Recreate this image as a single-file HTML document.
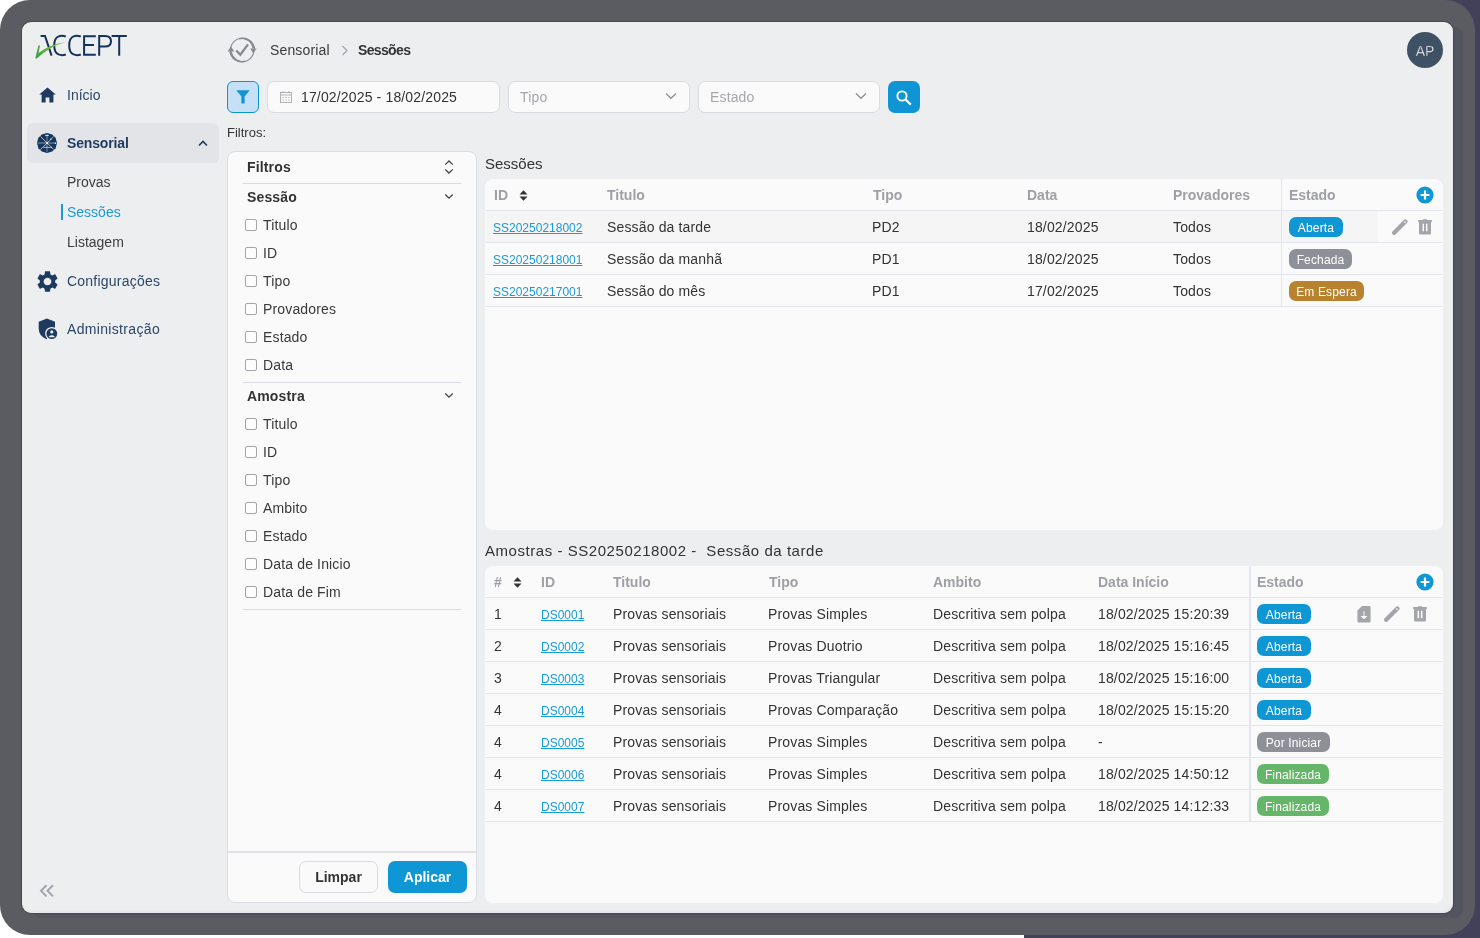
<!DOCTYPE html>
<html><head><meta charset="utf-8">
<style>
*{box-sizing:border-box;margin:0;padding:0}
html,body{width:1480px;height:938px;overflow:hidden}
body{position:relative;font-family:"Liberation Sans",sans-serif;background:linear-gradient(90deg,#ffffff 0,#ffffff 1024px,#424159 1024px)}
.a{position:absolute;white-space:nowrap;line-height:20px}
.frame{position:absolute;left:0;top:0;width:1475px;height:935px;background:#5a5c61;border-radius:30px}
.win{position:absolute;left:22px;top:22px;width:1431px;height:891px;background:#edeef0;border-radius:9px;box-shadow:0 0 0 1px #48494e,10px 5px 1px 0 rgba(50,55,90,0.18),inset 0 -2px 3px rgba(0,0,0,0.025)}
.nav{color:#2b4668;font-size:14px}
.sub{color:#3d3d3d;font-size:14px}
.t14{font-size:14px;color:#333;letter-spacing:0.15px}
.hd{font-size:14px;color:#9ea0a6;font-weight:bold}
.card{position:absolute;background:#fafafa;border-radius:8px}
.hl{position:absolute;height:1px;background:#e3e6ee}
.vl{position:absolute;width:1px;background:#e3e6ee}
.cb{position:absolute;width:12px;height:12px;border:1.2px solid #a3a5ab;border-radius:2px;background:#fdfdfd}
.lnk{font-size:12px;color:#1a9ad6;text-decoration:underline}
.badge{position:absolute;height:20px;border-radius:7px;color:#fff;font-size:12px;line-height:22px;text-align:center;white-space:nowrap;letter-spacing:0.15px}
.blue{background:#0f96d4}.gray{background:#8e9097}.orange{background:#b8822f}.green{background:#66b66a}
</style></head><body><div id="root" style="position:absolute;left:0;top:0;width:1480px;height:938px;will-change:transform">
<div class="frame"></div>
<div class="win"></div>

<!-- LOGO -->
<svg class="a" style="left:30px;top:28px" width="105" height="36" viewBox="30 28 105 36">
 <defs><linearGradient id="gg" x1="0" y1="1" x2="1" y2="0"><stop offset="0" stop-color="#3a9c48"/><stop offset="1" stop-color="#8cc63f"/></linearGradient></defs>
 <g fill="none" stroke="#16325a" stroke-width="2">
  <path d="M40.6 35.9H45L51.6 55.6"/>
  <path d="M65.8 36.5C62 35.3 54.2 34.6 54.2 45.4C54.2 56.1 62 55.7 65.8 54.5"/>
  <path d="M80.8 36.5C77 35.3 69.2 34.6 69.2 45.4C69.2 56.1 77 55.7 80.8 54.5"/>
  <path d="M95.8 36.3H84.1V54.8H95.8M84.1 45.1H94"/>
  <path d="M99.2 55.7V35.9H105Q111 35.9 111 41.2Q111 46.6 105 46.6H99.2"/>
  <path d="M111.6 35.9H126.8M119.2 35.9V55.7"/>
 </g>
 <path d="M35.3 58.2L38.3 45.6Q39.5 44.6 40 46L38.6 53Q50 44 65.5 42.2Q50 46 36.8 58.6Z" fill="url(#gg)"/>
</svg>

<!-- SIDEBAR -->
<svg class="a" style="left:39px;top:87px" width="17" height="16" viewBox="0 0 17 16"><path d="M8.5 0.4L0.2 7.6H2.6V15.4H6.6V10.6H10.4V15.4H14.4V7.6H16.8Z" fill="#1e3a5f"/></svg>
<div class="a nav" style="left:67px;top:85px">Início</div>

<div class="a" style="left:27px;top:123px;width:192px;height:40px;background:#e3e4e8;border-radius:6px"></div>
<svg class="a" style="left:35px;top:131px" width="24" height="24" viewBox="0 0 24 24"><path d="M12 2L17.2 3.4L20.6 6.8L22 12L20.6 17.2L17.2 20.6L12 22L6.8 20.6L3.4 17.2L2 12L3.4 6.8L6.8 3.4Z" fill="#16365c"/><g stroke="#ffffff" fill="none"><path d="M2.6 12H21.4M12 3V21" stroke-width="1.3" opacity="0.32"/><path d="M5.6 5.6L18.6 18.4M18.6 5.6L5.4 18.6" stroke-width="0.8" opacity="0.8"/><path d="M8.5 16.6Q12 15.8 15.5 16.6M10 4.6Q12 4.2 14 4.6" stroke-width="0.9" opacity="0.7"/></g><g fill="#fff" opacity="0.85"><circle cx="12" cy="12" r="1"/><circle cx="15.7" cy="8.3" r="0.8"/><circle cx="20.4" cy="12.2" r="0.7"/><circle cx="12" cy="4.6" r="0.7"/><circle cx="16.4" cy="16.4" r="0.7"/></g></svg>
<div class="a nav" style="left:67px;top:133px;font-weight:bold;color:#1f3a5f;letter-spacing:-0.15px">Sensorial</div>
<svg class="a" style="left:198px;top:139px" width="10" height="8" viewBox="0 0 10 8"><path d="M1 6.5L5 2.5L9 6.5" fill="none" stroke="#1f3a5f" stroke-width="1.6"/></svg>

<div class="a sub" style="left:67px;top:172px">Provas</div>
<div class="a" style="left:61px;top:204px;width:2px;height:16px;background:#1a9ad6"></div>
<div class="a sub" style="left:67px;top:202px;color:#1a9ad6">Sessões</div>
<div class="a sub" style="left:67px;top:232px">Listagem</div>

<svg class="a" style="left:36.6px;top:270.6px" width="21" height="21" viewBox="2.2 2.2 19.6 19.6"><path fill="#1e3a5f" d="M19.14 12.94c.04-.3.06-.61.06-.94 0-.32-.02-.64-.07-.94l2.03-1.58c.18-.14.23-.41.12-.61l-1.92-3.32c-.12-.22-.37-.29-.59-.22l-2.39.96c-.5-.38-1.03-.7-1.62-.94l-.36-2.54c-.04-.24-.24-.41-.48-.41h-3.84c-.24 0-.43.17-.47.41l-.36 2.54c-.59.24-1.13.57-1.62.94l-2.39-.96c-.22-.08-.47 0-.59.22L2.74 8.87c-.12.21-.08.47.12.61l2.03 1.58c-.05.3-.09.63-.09.94s.02.64.07.94l-2.03 1.58c-.18.14-.23.41-.12.61l1.92 3.32c.12.22.37.29.59.22l2.39-.96c.5.38 1.03.7 1.62.94l.36 2.54c.05.24.24.41.48.41h3.84c.24 0 .44-.17.47-.41l.36-2.54c.59-.24 1.13-.56 1.62-.94l2.39.96c.22.08.47 0 .59-.22l1.92-3.32c.12-.22.07-.47-.12-.61l-2.01-1.58zM12 15.6c-1.98 0-3.6-1.62-3.6-3.6s1.62-3.6 3.6-3.6 3.6 1.62 3.6 3.6-1.62 3.6-3.6 3.6z"/></svg>
<div class="a nav" style="left:67px;top:271px;letter-spacing:0.22px">Configurações</div>

<svg class="a" style="left:36px;top:316px" width="24" height="26" viewBox="36 316 24 26"><path d="M46.9 318.6L38.7 321.7V328.6Q38.7 335.8 46.3 339.2L55 331V321.7Z" fill="#1e3a5f"/><circle cx="51.8" cy="333.6" r="6.7" fill="#edeef0"/><circle cx="51.8" cy="333.6" r="5.4" fill="#1e3a5f"/><circle cx="51.8" cy="331.9" r="1.55" fill="#edeef0"/><path d="M48.9 336.6Q51.8 333.9 54.7 336.6V337.2H48.9Z" fill="#edeef0"/></svg>
<div class="a nav" style="left:67px;top:319px;letter-spacing:0.33px">Administração</div>

<svg class="a" style="left:39px;top:884px" width="16" height="14" viewBox="0 0 16 14"><path d="M7.5 1.2L2 6.8L7.5 12.4M14 1.2L8.5 6.8L14 12.4" fill="none" stroke="#a2a5ab" stroke-width="2"/></svg>

<!-- TOPBAR -->
<svg class="a" style="left:224px;top:32px" width="36" height="36" viewBox="224 32 36 36"><g fill="none" stroke="#878a91"><circle cx="242.2" cy="50" r="11.7" stroke-width="1.1"/><path d="M239.17 38.70A11.7 11.7 0 0 1 244.23 38.48" stroke-width="1.5"/><path d="M244.23 38.48A11.7 11.7 0 0 1 248.91 40.42" stroke-width="1.9"/><path d="M248.91 40.42A11.7 11.7 0 0 1 252.33 44.15" stroke-width="2.3"/><path d="M252.33 44.15A11.7 11.7 0 0 1 253.79 48.37" stroke-width="2.6"/><path d="M245.23 61.30A11.7 11.7 0 0 1 240.17 61.52" stroke-width="1.5"/><path d="M240.17 61.52A11.7 11.7 0 0 1 235.49 59.58" stroke-width="1.9"/><path d="M235.49 59.58A11.7 11.7 0 0 1 232.07 55.85" stroke-width="2.3"/><path d="M232.07 55.85A11.7 11.7 0 0 1 230.61 51.63" stroke-width="2.6"/><path d="M236.3 50.5L240.3 54.8L248 44.4" stroke-width="2.3"/></g><path d="M230.9 46.2L227.6 51.4H234.2Z" fill="#878a91"/><path d="M253.3 53.6L250.1 48.6H256.5Z" fill="#878a91"/></svg>
<div class="a t14" style="left:270px;top:40px;color:#3a3a3a">Sensorial</div>
<svg class="a" style="left:341px;top:45px" width="8" height="11" viewBox="0 0 8 11"><path d="M1.5 1L6 5.5L1.5 10" fill="none" stroke="#a0a2a8" stroke-width="1.1"/></svg>
<div class="a t14" style="left:358px;top:40px;font-weight:bold;color:#333;letter-spacing:-0.65px">Sessões</div>

<div class="a" style="left:1407px;top:32px;width:36px;height:36px;border-radius:50%;background:#3f5165;color:#fff;font-size:14px;line-height:38px;text-align:center;-webkit-text-stroke:0.35px #3f5165">AP</div>

<!-- FILTER BAR -->
<div class="a" style="left:227px;top:81px;width:32px;height:32px;border-radius:6px;background:#c6e0f8;border:1px solid #0b94d4"></div>
<svg class="a" style="left:236px;top:90px" width="14" height="14" viewBox="0 0 14 14"><path d="M0.3 0.3H13.7L8.6 6.6V13.5H5.4V6.6Z" fill="#1295d3"/></svg>

<div class="a" style="left:267px;top:81px;width:233px;height:32px;border-radius:7px;background:#fafafa;border:1px solid #d8dbe2"></div>
<svg class="a" style="left:279px;top:90px" width="14" height="14" viewBox="0 0 14 14"><g fill="none" stroke="#a9abb1" stroke-width="0.9"><rect x="1.5" y="2.5" width="11" height="10"/><path d="M1.5 5H12.5M4 1V3M10 1V3"/></g><g fill="#a9abb1"><rect x="3.5" y="7" width="1.2" height="1"/><rect x="6.4" y="7" width="1.2" height="1"/><rect x="9.3" y="7" width="1.2" height="1"/><rect x="3.5" y="9.5" width="1.2" height="1"/><rect x="6.4" y="9.5" width="1.2" height="1"/><rect x="9.3" y="9.5" width="1.2" height="1"/></g></svg>
<div class="a t14" style="left:301px;top:87px;color:#333">17/02/2025 - 18/02/2025</div>

<div class="a" style="left:508px;top:81px;width:182px;height:32px;border-radius:7px;background:#fafafa;border:1px solid #d8dbe2"></div>
<div class="a t14" style="left:520px;top:87px;color:#a5a7ad">Tipo</div>
<svg class="a" style="left:665px;top:92px" width="12" height="8" viewBox="0 0 12 8"><path d="M1 1.5L6 6.3L11 1.5" fill="none" stroke="#8a8d94" stroke-width="1.2"/></svg>

<div class="a" style="left:698px;top:81px;width:182px;height:32px;border-radius:7px;background:#fafafa;border:1px solid #d8dbe2"></div>
<div class="a t14" style="left:710px;top:87px;color:#a5a7ad">Estado</div>
<svg class="a" style="left:855px;top:92px" width="12" height="8" viewBox="0 0 12 8"><path d="M1 1.5L6 6.3L11 1.5" fill="none" stroke="#8a8d94" stroke-width="1.2"/></svg>

<div class="a" style="left:888px;top:81px;width:32px;height:32px;border-radius:7px;background:#0f95d3"></div>
<svg class="a" style="left:896px;top:90px" width="16" height="16" viewBox="0 0 16 16"><circle cx="6" cy="6" r="4.6" fill="none" stroke="#fff" stroke-width="1.9"/><path d="M9.3 9.3L14.8 14.6" stroke="#fff" stroke-width="2.2"/></svg>

<div class="a" style="left:227px;top:123px;font-size:13px;color:#333">Filtros:</div>

<div class="card" style="left:227px;top:151px;width:250px;height:752px;border:1px solid #dadde4"></div>
<div class="a t14" style="left:247px;top:157px;font-weight:bold;color:#333">Filtros</div>
<svg class="a" style="left:444px;top:160px" width="10" height="14" viewBox="0 0 10 14"><path d="M1.2 4.6L5 1L8.8 4.6M1.2 9.4L5 13L8.8 9.4" fill="none" stroke="#444" stroke-width="1.3"/></svg>
<div class="hl" style="left:243px;top:183px;width:218px;background:#d9dce3"></div>
<div class="a t14" style="left:247px;top:187px;font-weight:bold;color:#333">Sessão</div>
<svg class="a" style="left:444px;top:193px" width="10" height="7" viewBox="0 0 10 7"><path d="M1.3 1.5L5 5.2L8.7 1.5" fill="none" stroke="#444" stroke-width="1.3"/></svg>
<div class="cb" style="left:245px;top:219px"></div>
<div class="a t14" style="left:263px;top:215px;color:#3a3a3a">Titulo</div>
<div class="cb" style="left:245px;top:247px"></div>
<div class="a t14" style="left:263px;top:243px;color:#3a3a3a">ID</div>
<div class="cb" style="left:245px;top:275px"></div>
<div class="a t14" style="left:263px;top:271px;color:#3a3a3a">Tipo</div>
<div class="cb" style="left:245px;top:303px"></div>
<div class="a t14" style="left:263px;top:299px;color:#3a3a3a">Provadores</div>
<div class="cb" style="left:245px;top:331px"></div>
<div class="a t14" style="left:263px;top:327px;color:#3a3a3a">Estado</div>
<div class="cb" style="left:245px;top:359px"></div>
<div class="a t14" style="left:263px;top:355px;color:#3a3a3a">Data</div>
<div class="hl" style="left:243px;top:382px;width:218px;background:#d9dce3"></div>
<div class="a t14" style="left:247px;top:386px;font-weight:bold;color:#333">Amostra</div>
<svg class="a" style="left:444px;top:392px" width="10" height="7" viewBox="0 0 10 7"><path d="M1.3 1.5L5 5.2L8.7 1.5" fill="none" stroke="#444" stroke-width="1.3"/></svg>
<div class="cb" style="left:245px;top:418px"></div>
<div class="a t14" style="left:263px;top:414px;color:#3a3a3a">Titulo</div>
<div class="cb" style="left:245px;top:446px"></div>
<div class="a t14" style="left:263px;top:442px;color:#3a3a3a">ID</div>
<div class="cb" style="left:245px;top:474px"></div>
<div class="a t14" style="left:263px;top:470px;color:#3a3a3a">Tipo</div>
<div class="cb" style="left:245px;top:502px"></div>
<div class="a t14" style="left:263px;top:498px;color:#3a3a3a">Ambito</div>
<div class="cb" style="left:245px;top:530px"></div>
<div class="a t14" style="left:263px;top:526px;color:#3a3a3a">Estado</div>
<div class="cb" style="left:245px;top:558px"></div>
<div class="a t14" style="left:263px;top:554px;color:#3a3a3a">Data de Inicio</div>
<div class="cb" style="left:245px;top:586px"></div>
<div class="a t14" style="left:263px;top:582px;color:#3a3a3a">Data de Fim</div>
<div class="hl" style="left:243px;top:609px;width:218px;background:#d9dce3"></div>
<div class="hl" style="left:228px;top:851px;width:248px;height:2px;background:#dfe1e7"></div>
<div class="a" style="left:299px;top:861px;width:79px;height:32px;border-radius:7px;border:1px solid #d8dbe2;background:#fafafa;font-size:14px;font-weight:bold;color:#333;text-align:center;line-height:30px">Limpar</div>
<div class="a" style="left:388px;top:861px;width:79px;height:32px;border-radius:7px;background:#0f96d4;font-size:14px;font-weight:bold;color:#fff;text-align:center;line-height:32px">Aplicar</div>
<div class="a" style="left:485px;top:154px;font-size:15px;color:#333">Sessões</div>
<div class="card" style="left:485px;top:179px;width:958px;height:351px"></div>
<div class="a hd" style="left:494px;top:185px">ID</div>
<div class="a hd" style="left:607px;top:185px">Titulo</div>
<div class="a hd" style="left:873px;top:185px">Tipo</div>
<div class="a hd" style="left:1027px;top:185px">Data</div>
<div class="a hd" style="left:1173px;top:185px">Provadores</div>
<div class="a hd" style="left:1289px;top:185px">Estado</div>
<svg class="a" style="left:519px;top:190px" width="9" height="11" viewBox="0 0 9 11"><path d="M0.5 4.5L4.5 0.3L8.5 4.5ZM0.5 6.5L4.5 10.7L8.5 6.5Z" fill="#333"/></svg>
<svg class="a" style="left:1416px;top:186px" width="18" height="18" viewBox="0 0 18 18"><circle cx="9" cy="9" r="8.6" fill="#0f96d4"/><path d="M9 4.6V13.4M4.6 9H13.4" stroke="#fff" stroke-width="2.2"/></svg>
<div class="hl" style="left:485px;top:210px;width:958px"></div>
<div class="a" style="left:485px;top:211px;width:893px;height:31px;background:#f5f5f6"></div>
<div class="a lnk" style="left:493px;top:218px">SS20250218002</div>
<div class="a t14" style="left:607px;top:217px">Sessão da tarde</div>
<div class="a t14" style="left:872px;top:217px">PD2</div>
<div class="a t14" style="left:1027px;top:217px">18/02/2025</div>
<div class="a t14" style="left:1173px;top:217px">Todos</div>
<div class="badge blue" style="left:1289px;top:217px;width:54px">Aberta</div>
<div class="hl" style="left:485px;top:242px;width:958px"></div>
<div class="a lnk" style="left:493px;top:250px">SS20250218001</div>
<div class="a t14" style="left:607px;top:249px">Sessão da manhã</div>
<div class="a t14" style="left:872px;top:249px">PD1</div>
<div class="a t14" style="left:1027px;top:249px">18/02/2025</div>
<div class="a t14" style="left:1173px;top:249px">Todos</div>
<div class="badge gray" style="left:1289px;top:249px;width:63px">Fechada</div>
<div class="hl" style="left:485px;top:274px;width:958px"></div>
<div class="a lnk" style="left:493px;top:282px">SS20250217001</div>
<div class="a t14" style="left:607px;top:281px">Sessão do mês</div>
<div class="a t14" style="left:872px;top:281px">PD1</div>
<div class="a t14" style="left:1027px;top:281px">17/02/2025</div>
<div class="a t14" style="left:1173px;top:281px">Todos</div>
<div class="badge orange" style="left:1289px;top:281px;width:75px">Em Espera</div>
<div class="hl" style="left:485px;top:306px;width:958px"></div>
<div class="vl" style="left:1281px;top:179px;height:127px"></div>
<svg class="a" style="left:1392px;top:219px" width="16" height="16" viewBox="0 0 16 16"><path d="M2.2 13.8L13.4 2.6" stroke="#a3a5ab" stroke-width="4.3" stroke-linecap="round"/><circle cx="12.9" cy="3.1" r="0.85" fill="#fafafa"/></svg>
<svg class="a" style="left:1418px;top:219px" width="14" height="16" viewBox="0 0 14 16"><path d="M0.2 1H4.6L5.2 0.2H8.8L9.4 1H13.8V3.1H0.2ZM1 3H13V14Q13 15.6 11.4 15.6H2.6Q1 15.6 1 14Z" fill="#a3a5ab"/><path d="M5.3 4.8V12.2M8.7 4.8V12.2" stroke="#fafafa" stroke-width="1.5"/></svg>
<div class="a" style="left:485px;top:541px;font-size:15px;color:#333;letter-spacing:0.55px">Amostras - SS20250218002 - &nbsp;Sessão da tarde</div>
<div class="card" style="left:485px;top:566px;width:958px;height:337px"></div>
<div class="a hd" style="left:494px;top:572px">#</div>
<div class="a hd" style="left:541px;top:572px">ID</div>
<div class="a hd" style="left:613px;top:572px">Titulo</div>
<div class="a hd" style="left:769px;top:572px">Tipo</div>
<div class="a hd" style="left:933px;top:572px">Ambito</div>
<div class="a hd" style="left:1098px;top:572px">Data Início</div>
<div class="a hd" style="left:1257px;top:572px">Estado</div>
<svg class="a" style="left:513px;top:577px" width="9" height="11" viewBox="0 0 9 11"><path d="M0.5 4.5L4.5 0.3L8.5 4.5ZM0.5 6.5L4.5 10.7L8.5 6.5Z" fill="#333"/></svg>
<svg class="a" style="left:1416px;top:573px" width="18" height="18" viewBox="0 0 18 18"><circle cx="9" cy="9" r="8.6" fill="#0f96d4"/><path d="M9 4.6V13.4M4.6 9H13.4" stroke="#fff" stroke-width="2.2"/></svg>
<div class="hl" style="left:485px;top:597px;width:958px"></div>
<div class="a t14" style="left:494px;top:604px">1</div>
<div class="a lnk" style="left:541px;top:605px">DS0001</div>
<div class="a t14" style="left:613px;top:604px">Provas sensoriais</div>
<div class="a t14" style="left:768px;top:604px">Provas Simples</div>
<div class="a t14" style="left:933px;top:604px">Descritiva sem polpa</div>
<div class="a t14" style="left:1098px;top:604px">18/02/2025 15:20:39</div>
<div class="badge blue" style="left:1257px;top:604px;width:54px">Aberta</div>
<div class="hl" style="left:485px;top:629px;width:958px"></div>
<div class="a t14" style="left:494px;top:636px">2</div>
<div class="a lnk" style="left:541px;top:637px">DS0002</div>
<div class="a t14" style="left:613px;top:636px">Provas sensoriais</div>
<div class="a t14" style="left:768px;top:636px">Provas Duotrio</div>
<div class="a t14" style="left:933px;top:636px">Descritiva sem polpa</div>
<div class="a t14" style="left:1098px;top:636px">18/02/2025 15:16:45</div>
<div class="badge blue" style="left:1257px;top:636px;width:54px">Aberta</div>
<div class="hl" style="left:485px;top:661px;width:958px"></div>
<div class="a t14" style="left:494px;top:668px">3</div>
<div class="a lnk" style="left:541px;top:669px">DS0003</div>
<div class="a t14" style="left:613px;top:668px">Provas sensoriais</div>
<div class="a t14" style="left:768px;top:668px">Provas Triangular</div>
<div class="a t14" style="left:933px;top:668px">Descritiva sem polpa</div>
<div class="a t14" style="left:1098px;top:668px">18/02/2025 15:16:00</div>
<div class="badge blue" style="left:1257px;top:668px;width:54px">Aberta</div>
<div class="hl" style="left:485px;top:693px;width:958px"></div>
<div class="a t14" style="left:494px;top:700px">4</div>
<div class="a lnk" style="left:541px;top:701px">DS0004</div>
<div class="a t14" style="left:613px;top:700px">Provas sensoriais</div>
<div class="a t14" style="left:768px;top:700px">Provas Comparação</div>
<div class="a t14" style="left:933px;top:700px">Descritiva sem polpa</div>
<div class="a t14" style="left:1098px;top:700px">18/02/2025 15:15:20</div>
<div class="badge blue" style="left:1257px;top:700px;width:54px">Aberta</div>
<div class="hl" style="left:485px;top:725px;width:958px"></div>
<div class="a t14" style="left:494px;top:732px">4</div>
<div class="a lnk" style="left:541px;top:733px">DS0005</div>
<div class="a t14" style="left:613px;top:732px">Provas sensoriais</div>
<div class="a t14" style="left:768px;top:732px">Provas Simples</div>
<div class="a t14" style="left:933px;top:732px">Descritiva sem polpa</div>
<div class="a t14" style="left:1098px;top:732px">-</div>
<div class="badge gray" style="left:1257px;top:732px;width:73px">Por Iniciar</div>
<div class="hl" style="left:485px;top:757px;width:958px"></div>
<div class="a t14" style="left:494px;top:764px">4</div>
<div class="a lnk" style="left:541px;top:765px">DS0006</div>
<div class="a t14" style="left:613px;top:764px">Provas sensoriais</div>
<div class="a t14" style="left:768px;top:764px">Provas Simples</div>
<div class="a t14" style="left:933px;top:764px">Descritiva sem polpa</div>
<div class="a t14" style="left:1098px;top:764px">18/02/2025 14:50:12</div>
<div class="badge green" style="left:1257px;top:764px;width:72px">Finalizada</div>
<div class="hl" style="left:485px;top:789px;width:958px"></div>
<div class="a t14" style="left:494px;top:796px">4</div>
<div class="a lnk" style="left:541px;top:797px">DS0007</div>
<div class="a t14" style="left:613px;top:796px">Provas sensoriais</div>
<div class="a t14" style="left:768px;top:796px">Provas Simples</div>
<div class="a t14" style="left:933px;top:796px">Descritiva sem polpa</div>
<div class="a t14" style="left:1098px;top:796px">18/02/2025 14:12:33</div>
<div class="badge green" style="left:1257px;top:796px;width:72px">Finalizada</div>
<div class="hl" style="left:485px;top:821px;width:958px"></div>
<div class="vl" style="left:1249px;top:566px;height:255px;width:2px"></div>
<svg class="a" style="left:1357px;top:606px" width="14" height="17" viewBox="0 0 14 17"><path d="M5 0H12Q13.6 0 13.6 1.6V15Q13.6 16.6 12 16.6H2Q0.4 16.6 0.4 15V4.6Z" fill="#a3a5ab"/><path d="M6.5 5.2V10H3.5L7 13.2L10.5 10H7.5V5.2Z" fill="#fafafa"/></svg>
<svg class="a" style="left:1384px;top:606px" width="16" height="16" viewBox="0 0 16 16"><path d="M2.2 13.8L13.4 2.6" stroke="#a3a5ab" stroke-width="4.3" stroke-linecap="round"/><circle cx="12.9" cy="3.1" r="0.85" fill="#fafafa"/></svg>
<svg class="a" style="left:1413px;top:606px" width="14" height="16" viewBox="0 0 14 16"><path d="M0.2 1H4.6L5.2 0.2H8.8L9.4 1H13.8V3.1H0.2ZM1 3H13V14Q13 15.6 11.4 15.6H2.6Q1 15.6 1 14Z" fill="#a3a5ab"/><path d="M5.3 4.8V12.2M8.7 4.8V12.2" stroke="#fafafa" stroke-width="1.5"/></svg>
</div></body></html>
